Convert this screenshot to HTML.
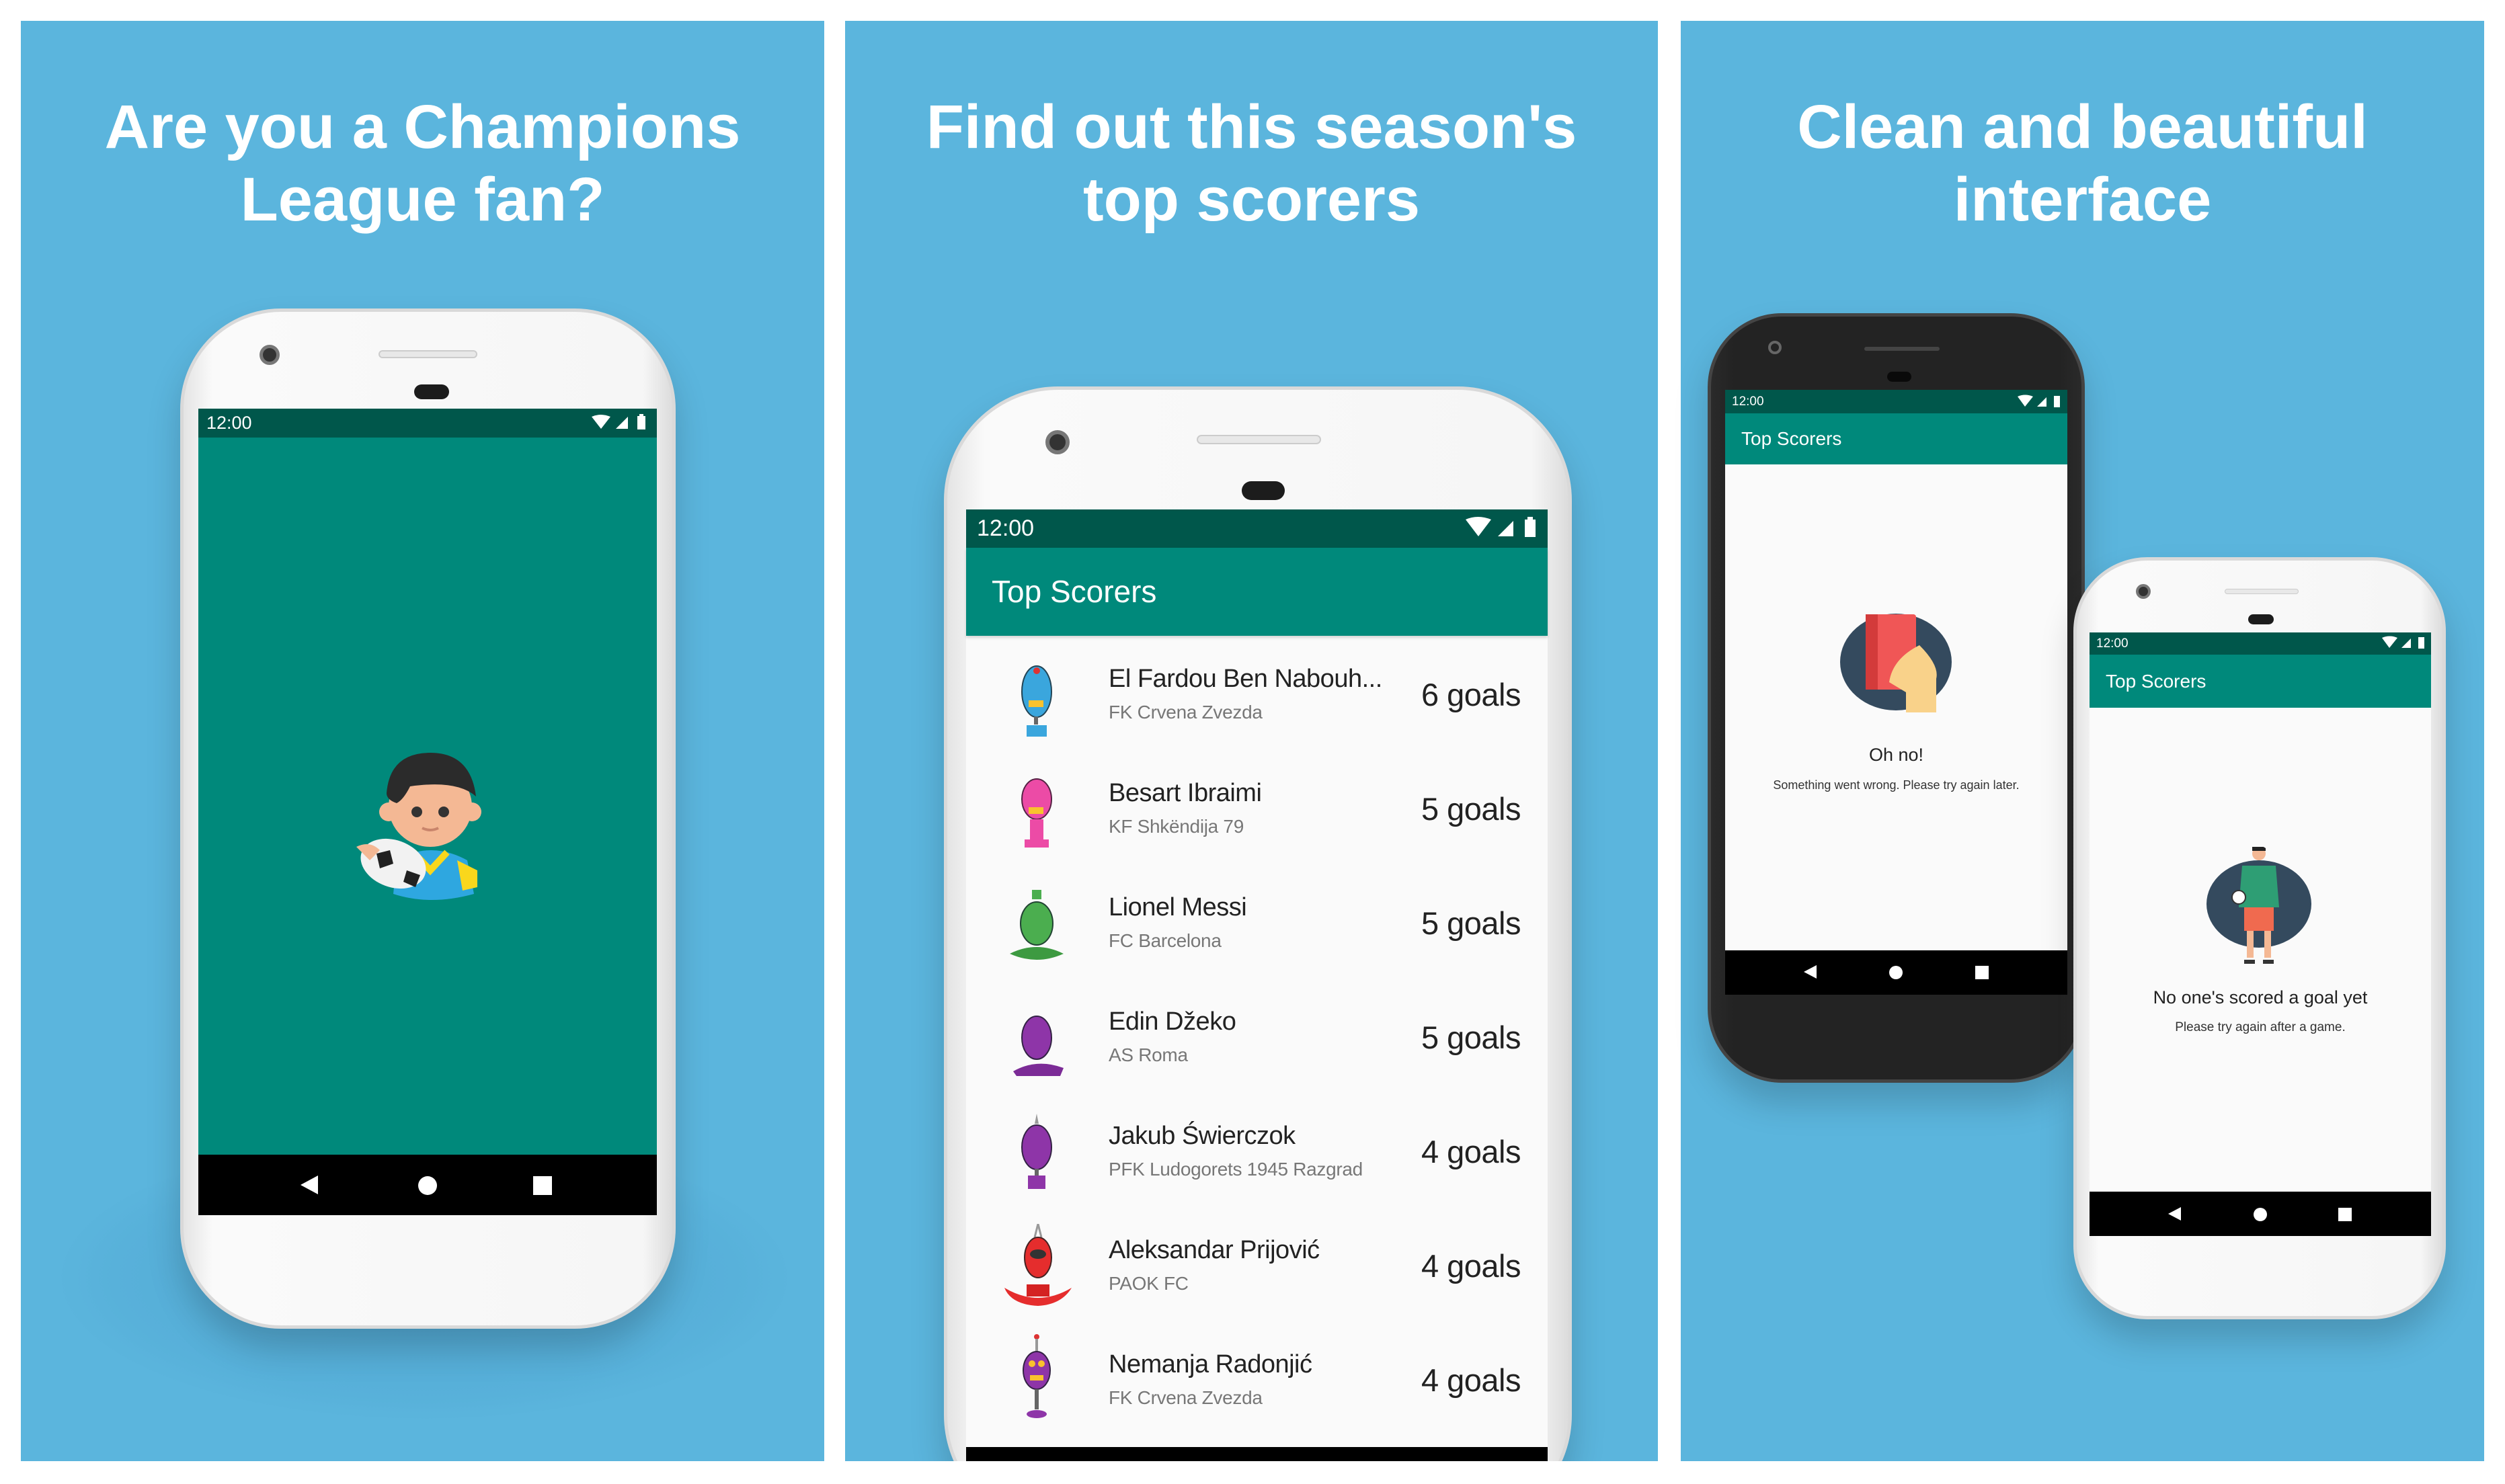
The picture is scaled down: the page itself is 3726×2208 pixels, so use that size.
<!DOCTYPE html>
<html style="overflow:hidden"><head><meta charset="utf-8"><style>
*{margin:0;padding:0;box-sizing:border-box}
body{width:3726px;height:2208px;background:#fff;position:relative;overflow:hidden;font-family:"Liberation Sans",sans-serif}
.a{position:absolute}
.panel{position:absolute;top:31px;height:2143px;background:#5BB5DD;overflow:hidden}
.title{position:absolute;left:0;right:0;text-align:center;color:#fff;font-weight:bold;font-size:92px;line-height:108px}
.phone{position:absolute;border-radius:150px;background:linear-gradient(90deg,#e4e4e4,#fafafa 6%,#f6f6f6 94%,#dcdcdc);border:5px solid #d9d9d9;box-shadow:0 30px 50px rgba(0,0,0,.18)}
.dark{background:linear-gradient(90deg,#2a2a2a,#232323 6%,#232323 94%,#2a2a2a);border-color:#444}
.sb{position:absolute;background:#00574B;color:#fff}
.ab{position:absolute;background:#00897B;color:#fff}
.nav{position:absolute;background:#000}
.tri{width:0;height:0;border-style:solid;border-color:transparent #fff transparent transparent}
.row{position:absolute;left:0;width:865px;height:170px}
.nm{position:absolute;left:212px;font-size:38px;color:#222;white-space:nowrap;letter-spacing:-0.5px}
.cl{position:absolute;left:212px;font-size:28px;color:#777;white-space:nowrap;letter-spacing:-0.3px}
.gl{position:absolute;right:40px;font-size:47px;color:#222;letter-spacing:-0.5px}
#clip{position:absolute;left:0;top:0;width:3726px;height:2174px;overflow:hidden}
</style></head><body>
<div id="clip">
<!-- PANEL 1 -->
<div class="panel" style="left:31px;width:1195px">
  <div class="title" style="top:104px">Are you a Champions<br>League fan?</div>
  <div class="a" style="left:60px;top:1660px;width:1080px;height:420px;border-radius:50%;background:radial-gradient(ellipse at center,rgba(60,140,190,.35),rgba(60,140,190,.1) 60%,rgba(0,0,0,0) 72%)"></div>
</div>
<div class="phone" style="left:268px;top:459px;width:737px;height:1518px">
  <div class="a" style="left:113px;top:49px;width:30px;height:30px;border-radius:50%;background:#333;border:5px solid #777"></div>
  <div class="a" style="left:290px;top:57px;width:147px;height:12px;border-radius:6px;background:#e8e8e8;border:2px solid #ccc"></div>
  <div class="a" style="left:343px;top:108px;width:52px;height:22px;border-radius:11px;background:#1c1c1c"></div>
</div>
<div class="a" style="left:295px;top:608px;width:682px;height:1200px;background:#00897B"></div>
<div class="sb" style="left:295px;top:608px;width:682px;height:43px;font-size:27px;line-height:43px;padding-left:12px">12:00</div>
<svg class="a" style="left:878px;top:616px" width="90" height="28" viewBox="0 0 90 28"><path d="M2 4 Q15 -2 30 4 L16 22Z" fill="#fff"/><path d="M38 22 L56 4 L56 22Z" fill="#fff"/><rect x="70" y="3" width="12" height="20" fill="#fff"/><rect x="73" y="0" width="6" height="4" fill="#fff"/></svg>
<div class="nav" style="left:295px;top:1718px;width:682px;height:90px"></div>
<div class="a tri" style="left:447px;top:1749px;border-width:14px 26px 14px 0"></div>
<div class="a" style="left:622px;top:1750px;width:28px;height:28px;border-radius:50%;background:#fff"></div>
<div class="a" style="left:793px;top:1750px;width:28px;height:28px;background:#fff"></div>
<svg class="a" style="left:530px;top:1080px" width="215" height="260" viewBox="0 0 215 260">
  <path d="M60 200 Q110 170 165 200 L175 250 Q110 268 55 250Z" fill="#2EA7E0"/>
  <path d="M150 200 L180 215 L180 240 L158 245Z" fill="#F9D71C"/>
  <path d="M85 188 L110 215 L135 188" fill="none" stroke="#F9D71C" stroke-width="10"/>
  <ellipse cx="110" cy="120" rx="62" ry="60" fill="#F4B894"/>
  <circle cx="48" cy="128" r="14" fill="#F4B894"/><circle cx="172" cy="128" r="14" fill="#F4B894"/>
  <path d="M45 100 Q50 40 110 40 Q170 40 178 105 Q150 80 80 90 Q70 110 60 115 Q45 110 45 100Z" fill="#2B2B2B"/>
  <circle cx="90" cy="128" r="8" fill="#333"/><circle cx="130" cy="128" r="8" fill="#333"/>
  <path d="M98 152 Q110 158 122 152" stroke="#c9846b" stroke-width="4" fill="none"/>
  <ellipse cx="55" cy="205" rx="50" ry="35" fill="#f2f2f2" transform="rotate(20 55 205)"/>
  <path d="M30 190 L50 185 L55 205 L35 212Z M75 215 L95 222 L88 240 L70 232Z" fill="#222"/>
  <path d="M0 180 Q20 170 35 185 L20 200Z" fill="#F4B894"/>
</svg>

<!-- PANEL 2 -->
<div class="panel" style="left:1257px;width:1209px">
  <div class="title" style="top:104px">Find out this season's<br>top scorers</div>
</div>
<div class="phone" style="left:1404px;top:575px;width:934px;height:1700px;border-radius:170px">
  <div class="a" style="left:146px;top:60px;width:36px;height:36px;border-radius:50%;background:#333;border:6px solid #777"></div>
  <div class="a" style="left:371px;top:67px;width:185px;height:14px;border-radius:7px;background:#e8e8e8;border:2px solid #ccc"></div>
  <div class="a" style="left:438px;top:136px;width:64px;height:28px;border-radius:14px;background:#1c1c1c"></div>
</div>
<div class="a" style="left:1437px;top:758px;width:865px;height:1420px;background:#fafafa"></div>
<div class="sb" style="left:1437px;top:758px;width:865px;height:57px;font-size:34px;line-height:57px;padding-left:16px">12:00</div>
<svg class="a" style="left:2178px;top:768px" width="115" height="36" viewBox="0 0 115 36"><path d="M2 5 Q20 -3 40 5 L21 30Z" fill="#fff"/><path d="M50 30 L73 7 L73 30Z" fill="#fff"/><rect x="90" y="5" width="16" height="26" fill="#fff"/><rect x="94" y="1" width="8" height="5" fill="#fff"/></svg>
<div class="ab" style="left:1437px;top:815px;width:865px;height:131px;font-size:46px;line-height:131px;padding-left:38px;box-shadow:0 3px 4px rgba(0,0,0,.15)">Top Scorers</div>
<div class="a" style="left:1437px;top:949px;width:865px;height:1210px">
  <div class="row" style="top:0"><svg class="a" style="left:65px;top:35px" width="80" height="115" viewBox="0 0 80 115"><ellipse cx="40" cy="45" rx="22" ry="38" fill="#3AA6DD" stroke="#245" stroke-width="2"/><circle cx="40" cy="14" r="5" fill="#d33"/><rect x="28" y="58" width="22" height="10" fill="#F9C22E"/><rect x="36" y="82" width="6" height="12" fill="#666"/><path d="M25 95 H55 V112 H25Z" fill="#3AA6DD"/></svg><div class="nm" style="top:40px">El Fardou Ben Nabouh...</div><div class="cl" style="top:95px">FK Crvena Zvezda</div><div class="gl" style="top:57px">6 goals</div></div>
  <div class="row" style="top:170px"><svg class="a" style="left:65px;top:30px" width="80" height="115" viewBox="0 0 80 115"><ellipse cx="40" cy="40" rx="22" ry="30" fill="#EC4BA6" stroke="#524" stroke-width="2"/><rect x="28" y="52" width="22" height="10" fill="#F9C22E"/><path d="M30 70 H50 V100 H30Z" fill="#EC4BA6"/><path d="M22 100 H58 V112 H22Z" fill="#EC4BA6"/></svg><div class="nm" style="top:40px">Besart Ibraimi</div><div class="cl" style="top:95px">KF Shkëndija 79</div><div class="gl" style="top:57px">5 goals</div></div>
  <div class="row" style="top:340px"><svg class="a" style="left:60px;top:30px" width="90" height="115" viewBox="0 0 90 115"><rect x="38" y="5" width="14" height="14" fill="#4BAE4F"/><ellipse cx="45" cy="55" rx="24" ry="32" fill="#4BAE4F" stroke="#243" stroke-width="2"/><path d="M5 100 Q45 80 85 100 Q45 118 5 100Z" fill="#3D9A41"/></svg><div class="nm" style="top:40px">Lionel Messi</div><div class="cl" style="top:95px">FC Barcelona</div><div class="gl" style="top:57px">5 goals</div></div>
  <div class="row" style="top:510px"><svg class="a" style="left:60px;top:30px" width="90" height="115" viewBox="0 0 90 115"><ellipse cx="45" cy="55" rx="22" ry="32" fill="#8E35A8" stroke="#324" stroke-width="2"/><path d="M10 105 Q45 85 85 100 L80 112 H15Z" fill="#7B2B96"/></svg><div class="nm" style="top:40px">Edin Džeko</div><div class="cl" style="top:95px">AS Roma</div><div class="gl" style="top:57px">5 goals</div></div>
  <div class="row" style="top:680px"><svg class="a" style="left:60px;top:28px" width="90" height="115" viewBox="0 0 90 115"><path d="M45 0 L48 15 H42Z" fill="#999"/><ellipse cx="45" cy="50" rx="22" ry="33" fill="#8E35A8" stroke="#324" stroke-width="2"/><rect x="42" y="82" width="6" height="10" fill="#666"/><path d="M32 92 H58 V112 H32Z" fill="#8E35A8"/></svg><div class="nm" style="top:40px">Jakub Świerczok</div><div class="cl" style="top:95px">PFK Ludogorets 1945 Razgrad</div><div class="gl" style="top:57px">4 goals</div></div>
  <div class="row" style="top:850px"><svg class="a" style="left:52px;top:22px" width="110" height="125" viewBox="0 0 110 125"><path d="M55 0 L50 20 M55 0 L60 20" stroke="#999" stroke-width="3"/><ellipse cx="55" cy="50" rx="20" ry="30" fill="#E52D2D" stroke="#422" stroke-width="2"/><ellipse cx="55" cy="45" rx="12" ry="7" fill="#333"/><path d="M5 95 Q55 125 105 95 Q90 120 55 122 Q15 120 5 95Z" fill="#E52D2D"/><rect x="38" y="90" width="34" height="18" fill="#D42222"/></svg><div class="nm" style="top:40px">Aleksandar Prijović</div><div class="cl" style="top:95px">PAOK FC</div><div class="gl" style="top:57px">4 goals</div></div>
  <div class="row" style="top:1020px"><svg class="a" style="left:60px;top:15px" width="90" height="130" viewBox="0 0 90 130"><circle cx="45" cy="5" r="4" fill="#d33"/><rect x="43" y="8" width="4" height="20" fill="#999"/><ellipse cx="45" cy="55" rx="20" ry="28" fill="#8E35A8" stroke="#324" stroke-width="2"/><circle cx="38" cy="45" r="5" fill="#F9C22E"/><circle cx="52" cy="45" r="5" fill="#F9C22E"/><rect x="35" y="62" width="20" height="8" fill="#F9C22E"/><rect x="42" y="83" width="6" height="30" fill="#666"/><ellipse cx="45" cy="120" rx="15" ry="6" fill="#8E35A8"/></svg><div class="nm" style="top:40px">Nemanja Radonjić</div><div class="cl" style="top:95px">FK Crvena Zvezda</div><div class="gl" style="top:57px">4 goals</div></div>
</div>
<div class="nav" style="left:1437px;top:2153px;width:865px;height:21px"></div>

<!-- PANEL 3 -->
<div class="panel" style="left:2500px;width:1195px">
  <div class="title" style="top:104px">Clean and beautiful<br>interface</div>
</div>
<div class="phone dark" style="left:2540px;top:466px;width:561px;height:1145px;border-radius:110px">
  <div class="a" style="left:85px;top:36px;width:20px;height:20px;border-radius:50%;border:4px solid #666"></div>
  <div class="a" style="left:228px;top:45px;width:112px;height:6px;border-radius:3px;background:#444"></div>
  <div class="a" style="left:262px;top:82px;width:36px;height:15px;border-radius:8px;background:#0a0a0a"></div>
</div>
<div class="a" style="left:2566px;top:580px;width:509px;height:834px;background:#fafafa"></div>
<div class="sb" style="left:2566px;top:580px;width:509px;height:35px;font-size:19px;line-height:35px;padding-left:10px">12:00</div>
<svg class="a" style="left:3000px;top:587px" width="70" height="22" viewBox="0 0 70 22"><path d="M1 3 Q12 -2 24 3 L12 18Z" fill="#fff"/><path d="M30 18 L44 4 L44 18Z" fill="#fff"/><rect x="55" y="2" width="9" height="17" fill="#fff"/></svg>
<div class="ab" style="left:2566px;top:615px;width:509px;height:76px;font-size:28px;line-height:76px;padding-left:24px">Top Scorers</div>
<svg class="a" style="left:2735px;top:900px" width="170" height="160" viewBox="0 0 170 160"><ellipse cx="85" cy="85" rx="83" ry="72" fill="#344A5E"/><rect x="40" y="14" width="75" height="112" rx="4" fill="#F05656"/><rect x="40" y="14" width="18" height="112" fill="#D33B3B"/><path d="M75 115 Q80 80 120 60 Q150 90 145 110 L145 160 L100 160 L100 130Z" fill="#F9D28A"/></svg>
<div class="a" style="left:2566px;top:1108px;width:509px;text-align:center;font-size:27px;color:#222">Oh no!</div>
<div class="a" style="left:2566px;top:1158px;width:509px;text-align:center;font-size:18px;color:#333">Something went wrong. Please try again later.</div>
<div class="nav" style="left:2566px;top:1414px;width:509px;height:66px"></div>
<div class="a tri" style="left:2683px;top:1436px;border-width:10px 19px 10px 0"></div>
<div class="a" style="left:2810px;top:1437px;width:20px;height:20px;border-radius:50%;background:#fff"></div>
<div class="a" style="left:2938px;top:1437px;width:20px;height:20px;background:#fff"></div>

<div class="phone" style="left:3084px;top:829px;width:554px;height:1134px;border-radius:110px">
  <div class="a" style="left:88px;top:35px;width:22px;height:22px;border-radius:50%;background:#333;border:4px solid #777"></div>
  <div class="a" style="left:220px;top:42px;width:110px;height:8px;border-radius:4px;background:#e8e8e8;border:1px solid #ccc"></div>
  <div class="a" style="left:255px;top:80px;width:38px;height:15px;border-radius:8px;background:#1c1c1c"></div>
</div>
<div class="a" style="left:3108px;top:941px;width:508px;height:832px;background:#fafafa"></div>
<div class="sb" style="left:3108px;top:941px;width:508px;height:33px;font-size:19px;line-height:33px;padding-left:10px">12:00</div>
<svg class="a" style="left:3542px;top:946px" width="70" height="22" viewBox="0 0 70 22"><path d="M1 3 Q12 -2 24 3 L12 18Z" fill="#fff"/><path d="M30 18 L44 4 L44 18Z" fill="#fff"/><rect x="55" y="2" width="9" height="17" fill="#fff"/></svg>
<div class="ab" style="left:3108px;top:974px;width:508px;height:79px;font-size:28px;line-height:79px;padding-left:24px">Top Scorers</div>
<svg class="a" style="left:3280px;top:1260px" width="160" height="190" viewBox="0 0 160 190"><ellipse cx="80" cy="85" rx="78" ry="65" fill="#344A5E"/><circle cx="80" cy="10" r="10" fill="#F4B894"/><path d="M70 0 Q80 -5 90 2 L90 6 L70 6Z" fill="#222"/><path d="M55 28 H105 L110 90 H50Z" fill="#2E9E74"/><rect x="58" y="90" width="44" height="35" fill="#F06A4F"/><rect x="62" y="125" width="10" height="40" fill="#F4B894"/><rect x="88" y="125" width="10" height="40" fill="#F4B894"/><rect x="58" y="168" width="16" height="6" fill="#333"/><rect x="86" y="168" width="16" height="6" fill="#333"/><circle cx="50" cy="75" r="10" fill="#fff" stroke="#333" stroke-width="2"/></svg>
<div class="a" style="left:3108px;top:1469px;width:508px;text-align:center;font-size:27px;color:#222">No one's scored a goal yet</div>
<div class="a" style="left:3108px;top:1518px;width:508px;text-align:center;font-size:19px;color:#333">Please try again after a game.</div>
<div class="nav" style="left:3108px;top:1773px;width:508px;height:66px"></div>
<div class="a tri" style="left:3225px;top:1796px;border-width:10px 19px 10px 0"></div>
<div class="a" style="left:3352px;top:1797px;width:20px;height:20px;border-radius:50%;background:#fff"></div>
<div class="a" style="left:3478px;top:1797px;width:20px;height:20px;background:#fff"></div>
</div>
</body></html>
